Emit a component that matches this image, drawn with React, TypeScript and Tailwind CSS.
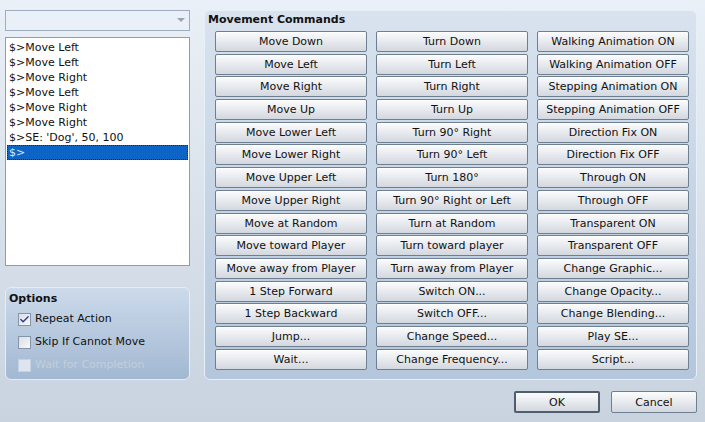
import { Check } from "lucide-react";

const font = "font-['DejaVu_Sans',Verdana,sans-serif]";

const commands: string[][] = [
  ["Move Down", "Turn Down", "Walking Animation ON"],
  ["Move Left", "Turn Left", "Walking Animation OFF"],
  ["Move Right", "Turn Right", "Stepping Animation ON"],
  ["Move Up", "Turn Up", "Stepping Animation OFF"],
  ["Move Lower Left", "Turn 90° Right", "Direction Fix ON"],
  ["Move Lower Right", "Turn 90° Left", "Direction Fix OFF"],
  ["Move Upper Left", "Turn 180°", "Through ON"],
  ["Move Upper Right", "Turn 90° Right or Left", "Through OFF"],
  ["Move at Random", "Turn at Random", "Transparent ON"],
  ["Move toward Player", "Turn toward player", "Transparent OFF"],
  ["Move away from Player", "Turn away from Player", "Change Graphic..."],
  ["1 Step Forward", "Switch ON...", "Change Opacity..."],
  ["1 Step Backward", "Switch OFF...", "Change Blending..."],
  ["Jump...", "Change Speed...", "Play SE..."],
  ["Wait...", "Change Frequency...", "Script..."],
];

const listItems = [
  "$>Move Left",
  "$>Move Left",
  "$>Move Right",
  "$>Move Left",
  "$>Move Right",
  "$>Move Right",
  "$>SE: 'Dog', 50, 100",
];

function CmdButton({ label }: { label: string }) {
  return (
    <button className="h-[21px] w-full rounded-[2px] border border-[#6f7f92] bg-gradient-to-b from-[#fbfcfd] to-[#d3d8df] text-[11px] leading-none text-[#111] shadow-[inset_0_1px_0_#ffffff]">
      {label}
    </button>
  );
}

function CheckRow({ label, checked, disabled }: { label: string; checked?: boolean; disabled?: boolean }) {
  return (
    <div className="flex h-[23px] items-center gap-[4px] pl-[12px]">
      <div
        className={
          disabled
            ? "flex h-[13px] w-[13px] items-center justify-center border border-[#c6d2e0] bg-[#dde6f0]"
            : "flex h-[13px] w-[13px] items-center justify-center border border-[#8595a8] bg-gradient-to-br from-[#d9dee5] to-[#f7f8fa]"
        }
      >
        {checked && <Check className="h-[11px] w-[11px] text-[#2a3f8a]" strokeWidth={3} />}
      </div>
      <span className={disabled ? "text-[11px] text-[#c2cedc]" : "text-[11px] text-[#111]"}>{label}</span>
    </div>
  );
}

export default function App() {
  return (
    <div className={`${font} flex h-[422px] w-[705px] flex-col bg-gradient-to-b from-[#eaf0f7] to-[#c8d3df] text-[#111]`}>
      <div className="flex pt-[10px]">
        {/* Left column */}
        <div className="ml-[5px] flex w-[185px] flex-col">
          <div className="flex h-[21px] items-center justify-end border border-[#9eacbd] bg-[#e9f0f8] pr-[4px]">
            <svg width="8" height="5" viewBox="0 0 8 5">
              <path d="M0 0 L8 0 L4 4 Z" fill="#9aa4b0" />
            </svg>
          </div>
          <div className="mt-[6px] h-[229px] border border-[#8f9db0] bg-white pt-[2px] pl-[1px] pr-[1px]">
            {listItems.map((item, i) => (
              <div key={i} className="h-[15px] pl-[2px] text-[11px] leading-[15px] whitespace-pre">
                {item}
              </div>
            ))}
            <div className="h-[15px] border border-dotted border-[#1b2b44] bg-[#0b64c6] pl-[1px] text-[11px] leading-[13px] text-[#dbe8ff]">
              $&gt;
            </div>
          </div>
          <div className="mt-[21px] h-[93px] rounded-[6px] border border-[#e4ecf5] bg-gradient-to-b from-[#ccdaeb] to-[#a2b8d2] pt-[4px]">
            <div className="pl-[3px] text-[11px] font-bold leading-[14px]">Options</div>
            <div className="mt-[2px]">
              <CheckRow label="Repeat Action" checked />
              <CheckRow label="Skip If Cannot Move" />
              <CheckRow label="Wait for Completion" disabled />
            </div>
          </div>
        </div>

        {/* Movement Commands panel */}
        <div className="ml-[14px] h-[370px] w-[493px] rounded-[6px] border border-[#e8eff7] bg-gradient-to-b from-[#d9e3ef] to-[#b3c6db] pt-[2px]">
          <div className="pl-[3px] text-[11px] font-bold leading-[14px]">Movement Commands</div>
          <div className="mt-[4px] ml-[10px] mr-[7px] grid grid-cols-3 gap-x-[9px] gap-y-[1.7px]">
            {commands.map((row) => row.map((label, j) => <CmdButton key={label + j} label={label} />))}
          </div>
        </div>
      </div>

      {/* Footer buttons */}
      <div className="mt-[11px] flex justify-end gap-[11px] pr-[8px]">
        <button className="h-[22px] w-[86px] rounded-[2px] border-2 border-[#4f5d6e] bg-gradient-to-b from-[#fbfcfd] to-[#d3d8df] text-[11px] leading-none">
          OK
        </button>
        <button className="h-[22px] w-[86px] rounded-[2px] border border-[#6f7f92] bg-gradient-to-b from-[#fbfcfd] to-[#d3d8df] text-[11px] leading-none">
          Cancel
        </button>
      </div>
    </div>
  );
}
